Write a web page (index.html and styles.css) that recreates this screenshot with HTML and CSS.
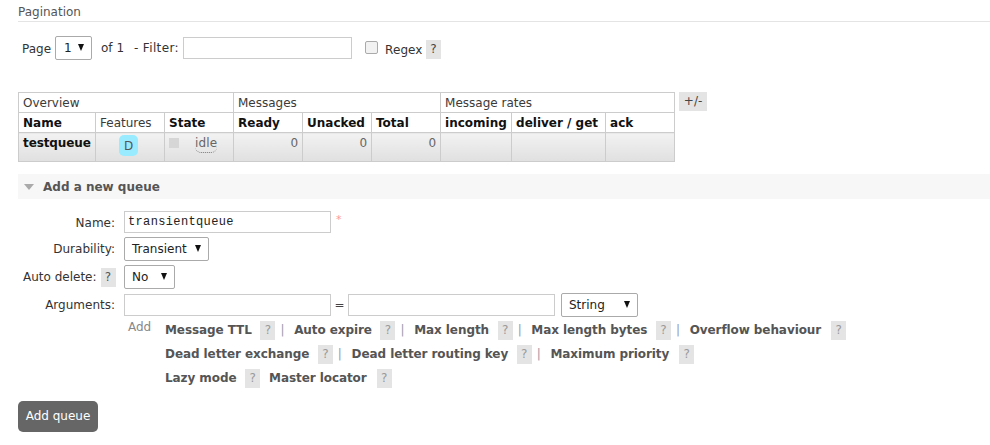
FILE: index.html
```html
<!DOCTYPE html>
<html lang="en">
<head>
<meta charset="utf-8">
<title>Queues</title>
<link rel="stylesheet" href="styles.css">
</head>
<body>
<section class="pagination">
  <h3 class="section-title">Pagination</h3>
  <div class="pager">
    <span class="pager-page">Page</span>
    <span class="select select-page">1<i class="caret"></i></span>
    <span class="pager-of">of 1</span>
    <span class="pager-filter">- Filter:</span>
    <span class="input input-filter"></span>
    <span class="checkbox"></span>
    <span class="pager-regex">Regex</span>
    <span class="help">?</span>
  </div>
</section>

<section class="queues">
  <table class="list">
    <colgroup>
      <col class="c1"><col class="c2"><col class="c3"><col class="c4"><col class="c5"><col class="c6"><col class="c7"><col class="c8"><col class="c9">
    </colgroup>
    <thead>
      <tr class="group">
        <th colspan="3">Overview</th>
        <th colspan="3">Messages</th>
        <th colspan="3">Message rates</th>
      </tr>
      <tr class="heads">
        <th>Name</th>
        <th class="plain">Features</th>
        <th>State</th>
        <th>Ready</th>
        <th>Unacked</th>
        <th>Total</th>
        <th>incoming</th>
        <th>deliver / get</th>
        <th>ack</th>
      </tr>
    </thead>
    <tbody>
      <tr>
        <td class="qname">testqueue</td>
        <td class="center"><span class="badge">D</span></td>
        <td class="state"><i class="state-dot"></i><abbr class="idle">idle</abbr></td>
        <td class="num">0</td>
        <td class="num">0</td>
        <td class="num">0</td>
        <td></td><td></td><td></td>
      </tr>
    </tbody>
  </table>
  <span class="toggle">+/-</span>
</section>

<section class="add">
  <h2 class="add-title"><i class="tri"></i>Add a new queue</h2>
  <div class="form">
    <label class="lbl row-name">Name:</label>
    <div class="ctl row-name"><span class="input input-text mono">transientqueue</span><span class="req">*</span></div>

    <label class="lbl row-dur">Durability:</label>
    <div class="ctl row-dur"><span class="select select-dur">Transient<i class="caret"></i></span></div>

    <label class="lbl row-auto">Auto delete:<span class="help help-dark">?</span></label>
    <div class="ctl row-auto"><span class="select select-no">No<i class="caret"></i></span></div>

    <label class="lbl row-args">Arguments:</label>
    <div class="ctl row-args">
      <span class="input input-text"></span>
      <span class="eq">=</span>
      <span class="input input-text"></span>
      <span class="select select-str">String<i class="caret"></i></span>
    </div>

    <div class="ctl-add">
      <span class="add-link">Add</span>
      <div class="shortcuts">
        <div class="sc-row"><b>Message TTL</b><span class="help">?</span><span class="bar">|</span><b>Auto expire</b><span class="help">?</span><span class="bar">|</span><b>Max length</b><span class="help">?</span><span class="bar">|</span><b>Max length bytes</b><span class="help">?</span><span class="bar">|</span><b>Overflow behaviour</b><span class="help">?</span></div>
        <div class="sc-row"><b>Dead letter exchange</b><span class="help">?</span><span class="bar">|</span><b>Dead letter routing key</b><span class="help">?</span><span class="bar">|</span><b>Maximum priority</b><span class="help">?</span></div>
        <div class="sc-row"><b>Lazy mode</b><span class="help">?</span><b class="after-help">Master locator</b><span class="help">?</span></div>
      </div>
    </div>
  </div>
  <span class="submit">Add queue</span>
</section>
</body>
</html>
```
FILE: styles.css
```css
* { box-sizing: border-box; }
html, body { margin: 0; padding: 0; }
body {
  width: 990px;
  height: 445px;
  overflow: hidden;
  background: #fff;
  color: #444;
  font: 12px/15px "DejaVu Sans", Verdana, sans-serif;
}
i { display: block; font-style: normal; }

.pagination { padding: 4px 0 0 18px; }
.section-title {
  margin: 0;
  height: 18px;
  font-size: 12px;
  font-weight: normal;
  color: #555;
  border-bottom: 1px solid #e4e4e4;
  line-height: 16px;
}
.pager {
  display: flex;
  align-items: center;
  height: 24px;
  margin-top: 14px;
  padding-left: 4px;
  color: #333;
}
.pager-page { width: 33px; position: relative; top: 1px; }
.pager-of { margin-left: 9px; width: 33px; }
.pager-filter { width: 49px; letter-spacing: 0.35px; white-space: nowrap; }
.pager-regex { margin-left: 7px; width: 41px; position: relative; top: 2px; letter-spacing: 0.1px; }

.input {
  display: inline-block;
  height: 22px;
  background: #fff;
  border: 1px solid #ccc;
}
.input-filter { width: 169px; }
.input-text { width: 207px; }
.mono {
  font: 12px/20px "Liberation Mono", "Courier New", monospace;
  letter-spacing: 0.36px;
  padding-left: 3px;
  color: #222;
}
.select {
  display: inline-flex;
  align-items: center;
  justify-content: space-between;
  height: 24px;
  padding: 0 7px 0 7px;
  background: #fff;
  border: 1px solid #aaa;
  border-radius: 2px;
  color: #222;
}
.select-page { width: 37px; padding-left: 8px; }
.select-dur { width: 85px; }
.select-no { width: 51px; }
.select-str { width: 77px; margin-left: 6px; }
.caret {
  width: 0;
  height: 0;
  margin-top: -2px;
  border-left: 3.5px solid transparent;
  border-right: 3.5px solid transparent;
  border-top: 7px solid #111;
}
.checkbox {
  width: 13px;
  height: 13px;
  margin: -2px 0 0 13px;
  border: 1px solid #aaa;
  border-radius: 2px;
  background: #f2f2f2;
}
.help {
  display: inline-block;
  flex: none;
  width: 15px;
  height: 19px;
  background: #e4e4e4;
  color: #999;
  text-align: center;
  line-height: 19px;
}
.pager .help { color: #444; position: relative; top: 1px; }
.help-dark { color: #555; margin-left: 4px; }

.queues {
  display: flex;
  align-items: flex-start;
  margin: 32px 0 0 18px;
}
.list {
  width: 656px;
  table-layout: fixed;
  border-collapse: collapse;
  border: 1px solid #ccc;
}
.c1 { width: 77px; } .c2 { width: 69px; } .c3 { width: 69px; }
.c4 { width: 69px; } .c5 { width: 69px; } .c6 { width: 69px; }
.c7 { width: 71px; } .c8 { width: 94px; } .c9 { width: 69px; }
.list th, .list td {
  border: 1px solid #ccc;
  padding: 1px 4px 0;
  text-align: left;
  white-space: nowrap;
  overflow: hidden;
}
.list th { height: 20px; line-height: 18px; color: #111; }
.list .group th { font-weight: normal; color: #3a3a3a; padding-top: 0; }
.list .heads th.plain { font-weight: normal; color: #3a3a3a; }
.list td {
  height: 29px;
  vertical-align: top;
  line-height: 19px;
  background: linear-gradient(#f2f2f2, #e0e0e0);
}
.list .qname { font-weight: bold; color: #111; letter-spacing: -0.1px; }
.list .center { text-align: center; padding: 2px 0 0; line-height: 0; }
.list .num { text-align: right; color: #666; }
.list .state { position: relative; padding-left: 4px; }
.badge {
  display: inline-block;
  width: 19px;
  height: 21px;
  margin-right: 3px;
  border-radius: 5px;
  background: #99ebff;
  color: #555;
  font-size: 12px;
  line-height: 23px;
  text-align: center;
}
.state-dot {
  position: absolute;
  left: 4px;
  top: 5px;
  width: 10px;
  height: 10px;
  background: #d6d6d6;
}
.idle {
  margin-left: 26px;
  color: #666;
  text-decoration: none;
  border-bottom: 1px dotted #777;
  border-radius: 0 0 6px 6px;
  display: inline-block;
  line-height: 17px;
  letter-spacing: 0.15px;
}
.toggle {
  width: 28px;
  height: 19px;
  margin-left: 4px;
  background: #e4e4e4;
  text-align: center;
  line-height: 18px;
  color: #444;
}

.add { margin: 12px 0 0 18px; }
.add-title {
  display: flex;
  align-items: center;
  height: 25px;
  padding-top: 1px;
  margin: 0;
  background: #f7f7f7;
  font-size: 12px;
  font-weight: bold;
  color: #555;
}
.tri {
  width: 0;
  height: 0;
  margin: 0 9px 0 6px;
  border-left: 5.5px solid transparent;
  border-right: 5.5px solid transparent;
  border-top: 6px solid #aaa;
}
.form {
  display: grid;
  grid-template-columns: 97px 1fr;
  column-gap: 9px;
  row-gap: 4px;
  margin-top: 12px;
}
.lbl {
  display: flex;
  align-items: center;
  justify-content: flex-end;
  color: #333;
  white-space: nowrap;
}
.lbl.row-name { padding-top: 2px; }
.ctl { display: flex; align-items: center; }
.ctl.row-auto { height: 24px; }
.lbl.row-auto { justify-content: flex-start; padding-left: 5px; }
.req { color: #f99; margin: -6px 0 0 5px; font-size: 11px; }
.eq { width: 17px; text-align: center; color: #444; }
.ctl-add {
  grid-column: 2;
  display: flex;
  align-items: flex-start;
  margin-top: -3px;
}
.add-link { width: 41px; color: #888; padding: 2px 0 0 4px; }
.sc-row {
  display: flex;
  align-items: center;
  height: 24px;
  white-space: nowrap;
}
.sc-row b { color: #555; letter-spacing: -0.08px; }
.sc-row .help { margin-left: 8.6px; }
.sc-row .help:last-child { margin-left: 10px; }
.sc-row .bar { margin: 0 9.7px 0 5px; color: #99a; }
.sc-row .after-help { margin-left: 9px; }
.submit {
  display: block;
  width: 80px;
  height: 31px;
  margin-top: 11px;
  background: #666;
  border-radius: 5px;
  color: #fff;
  text-align: center;
  line-height: 31px;
}
```
